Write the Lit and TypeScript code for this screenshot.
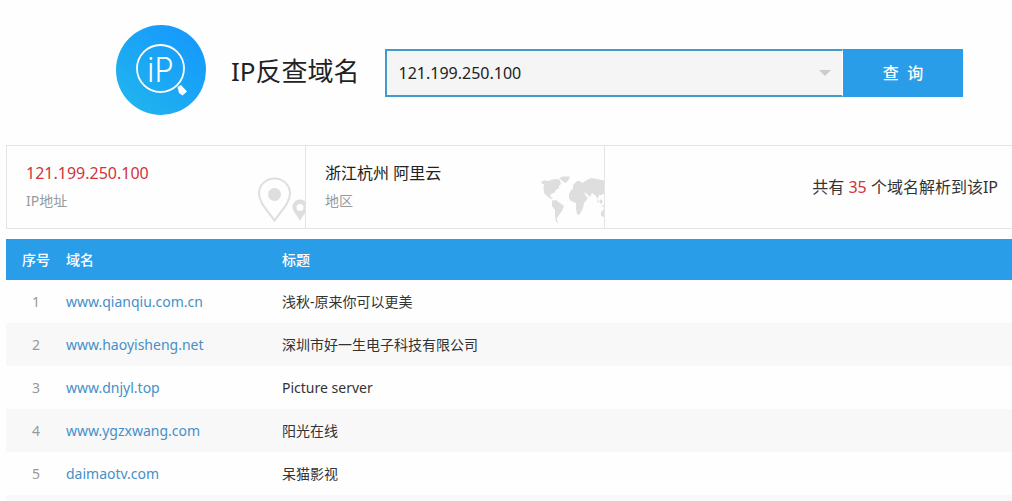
import { LitElement, html, css } from "lit";
import { customElement, state } from "lit/decorators.js";

interface DomainRow {
  domain: string;
  title: string;
}

@customElement("app-root")
export class AppRoot extends LitElement {
  static styles = css`
    :host {
      display: block;
      min-height: 100vh;
      background: #fefefe;
      color: #333;
      font: 14px/20px "Noto Sans", "Noto Sans CJK SC", sans-serif;
      overflow: hidden;
    }
    * {
      box-sizing: border-box;
    }
    .top {
      display: flex;
      align-items: center;
      padding: 25px 49px 30px 116px;
    }
    .logo {
      width: 90px;
      height: 90px;
      flex: none;
    }
    .logo-text {
      font: 300 35px "Roboto Condensed", "Liberation Sans Narrow", "Roboto", sans-serif;
      font-stretch: condensed;
      fill: #fff;
    }
    .name {
      margin: 2px 25px 0;
      font-size: 26px;
      line-height: 36px;
      font-weight: 400;
      color: #222;
      white-space: nowrap;
    }
    .search {
      display: flex;
      flex: 1;
      height: 48px;
      margin-top: 6px;
    }
    .field {
      position: relative;
      display: flex;
      flex: 1;
      min-width: 0;
      border: 2px solid #419cc9;
      border-right: 1px solid #fff;
      background: #f5f5f5;
    }
    .ip-input {
      flex: 1;
      min-width: 0;
      border: 0;
      outline: 0;
      padding: 0 40px 0 12px;
      background: transparent;
      font: inherit;
      font-size: 16px;
      color: #222;
    }
    .arrow {
      position: absolute;
      right: 11px;
      top: 19px;
      width: 12px;
      height: 6px;
      padding: 0;
      border: 0;
      background: #ccc;
      clip-path: polygon(0 0, 100% 0, 50% 100%);
    }
    .submit {
      width: 120px;
      border: 0;
      padding: 0;
      background: #2a9de8;
      color: #fff;
      font: inherit;
      font-size: 16px;
      font-weight: 500;
    }
    .main {
      padding-left: 6px;
    }
    .cards {
      display: grid;
      grid-template-columns: 299px 299px 1fr;
      height: 84px;
      border: 1px solid #e4e4e4;
      border-width: 1px 0 1px 1px;
    }
    .card {
      display: flex;
      justify-content: space-between;
      align-items: flex-end;
      border-right: 1px solid #e4e4e4;
      padding-left: 19px;
    }
    .info {
      align-self: flex-start;
      padding-top: 15px;
    }
    .value {
      font-size: 16px;
      line-height: 24px;
      color: #222;
    }
    .label {
      margin-top: 6px;
      color: #999;
    }
    .red,
    .value.red {
      color: #d0343c;
    }
    .art {
      display: block;
      fill: #dedede;
    }
    .total {
      align-self: center;
      justify-self: end;
      padding-right: 14px;
      font-size: 16px;
      line-height: 24px;
    }
    .list {
      width: 100%;
      margin-top: 10px;
      border-collapse: collapse;
      table-layout: fixed;
    }
    .list th {
      height: 41px;
      padding: 0;
      background: #2a9de8;
      color: #fff;
      font-weight: 500;
      text-align: left;
    }
    .list td {
      height: 43px;
      padding: 0;
    }
    .list tbody tr:nth-child(even) {
      background: #f8f8f8;
    }
    .list .num {
      width: 60px;
      text-align: center;
    }
    .list .dom {
      width: 216px;
    }
    .list .num-cell {
      text-align: center;
      color: #999;
    }
    .list .end {
      height: 6px;
    }
    .link {
      color: #4590c8;
      text-decoration: none;
    }
  `;

  @state() private ip = "121.199.250.100";

  private rows: DomainRow[] = [
    { domain: "www.qianqiu.com.cn", title: "浅秋-原来你可以更美" },
    { domain: "www.haoyisheng.net", title: "深圳市好一生电子科技有限公司" },
    { domain: "www.dnjyl.top", title: "Picture server" },
    { domain: "www.ygzxwang.com", title: "阳光在线" },
    { domain: "daimaotv.com", title: "呆猫影视" },
  ];

  private logo() {
    return html`<svg class="logo" viewBox="0 0 90 90" aria-hidden="true">
      <defs>
        <linearGradient id="disc" x1="0.1" y1="0.9" x2="0.8" y2="0.1">
          <stop offset="0" stop-color="#20b4ee" />
          <stop offset="1" stop-color="#169afc" />
        </linearGradient>
      </defs>
      <circle cx="45" cy="45" r="45" fill="url(#disc)" />
      <circle cx="44.5" cy="43.5" r="23.5" fill="none" stroke="#fff" stroke-width="1.8" />
      <text class="logo-text" x="31" y="57">iP</text>
      <path d="M61.500 62 65 60 71 66.500 66.500 70.500 63 68Z" fill="#fff" />
    </svg>`;
  }

  private pins() {
    return html`<svg class="art" width="47" height="51" viewBox="0 0 47 51" aria-hidden="true">
      <path d="M16.500 1.500C7.800 1.500 1 8.200 1 16.500C1 25.500 10 34 16.500 43.500C23 34 32 25.500 32 16.500C32 8.200 25.200 1.500 16.500 1.500Z"
        fill="none" stroke="#dedede" stroke-width="2" />
      <circle cx="16.500" cy="17.500" r="6.500" />
      <path fill-rule="evenodd" d="M42 22.500C37.600 22.500 34.500 25.700 34.500 30C34.500 35 39.500 38.500 42 44C44.500 38.500 49.500 35 49.500 30C49.500 25.700 46.400 22.500 42 22.500ZM42 27A3.500 3.500 0 1 1 42 34A3.500 3.500 0 1 1 42 27Z" />
    </svg>`;
  }

  private map() {
    return html`<svg class="art" width="63" height="52" viewBox="0 0 63 52" aria-hidden="true">
      <path d="M0 6 3 4.500 8 5 11 3.500 16 3 19 4 20 8 18 10 18 12 15 14 13 17 10 18 9 20 12 23 10 23 6 20 3 17 2.500 12 3 8 1 8Z" />
      <path d="M18 2 22 .5 29 .5 28 3 25 7 22 5.500Z" />
      <path d="M11 24.500 15 24 19 27 23 30 21 35 18 39 16 42 16 45 18 47 15 46 14 40 14 34 11 30Z" />
      <path d="M28 18 30 14 32 13 32 9 36 5 39 5 41 7 46 4 50 2 56 3 63 4.500 63 17 61 19 58 19 57 23 55 20 51 17 49 21 46 18 43 16 45 20 47 22 43 27 42 32 40 36 38 39 36 38 35 33 35 27 30 25 28 22Z" />
      <path d="M55 22 58 26 57 27ZM58 25 60 23 62 26 60 28ZM60 30 63 29 63 31ZM60 36 63 33 63 41 60 40Z" />
    </svg>`;
  }

  render() {
    return html`
      <header class="top">
        ${this.logo()}
        <h1 class="name">IP反查域名</h1>
        <form class="search" @submit=${(e: Event) => e.preventDefault()}>
          <div class="field">
            <input
              class="ip-input"
              type="text"
              aria-label="IP地址"
              .value=${this.ip}
              @input=${(e: Event) => (this.ip = (e.target as HTMLInputElement).value)}
            />
            <button class="arrow" type="button" aria-label="历史记录"></button>
          </div>
          <button class="submit" type="submit">查&nbsp;&nbsp;询</button>
        </form>
      </header>
      <main class="main">
        <section class="cards">
          <div class="card">
            <div class="info">
              <div class="value red">121.199.250.100</div>
              <div class="label">IP地址</div>
            </div>
            ${this.pins()}
          </div>
          <div class="card">
            <div class="info">
              <div class="value">浙江杭州 阿里云</div>
              <div class="label">地区</div>
            </div>
            ${this.map()}
          </div>
          <div class="total">共有 <span class="red">35</span> 个域名解析到该IP</div>
        </section>
        <table class="list">
          <thead>
            <tr>
              <th class="num">序号</th>
              <th class="dom">域名</th>
              <th>标题</th>
            </tr>
          </thead>
          <tbody>
            ${this.rows.map(
              (row, i) => html`<tr>
                <td class="num-cell">${i + 1}</td>
                <td><a class="link" href="#">${row.domain}</a></td>
                <td>${row.title}</td>
              </tr>`
            )}
            <tr><td class="end" colspan="3"></td></tr>
          </tbody>
        </table>
      </main>
    `;
  }
}
